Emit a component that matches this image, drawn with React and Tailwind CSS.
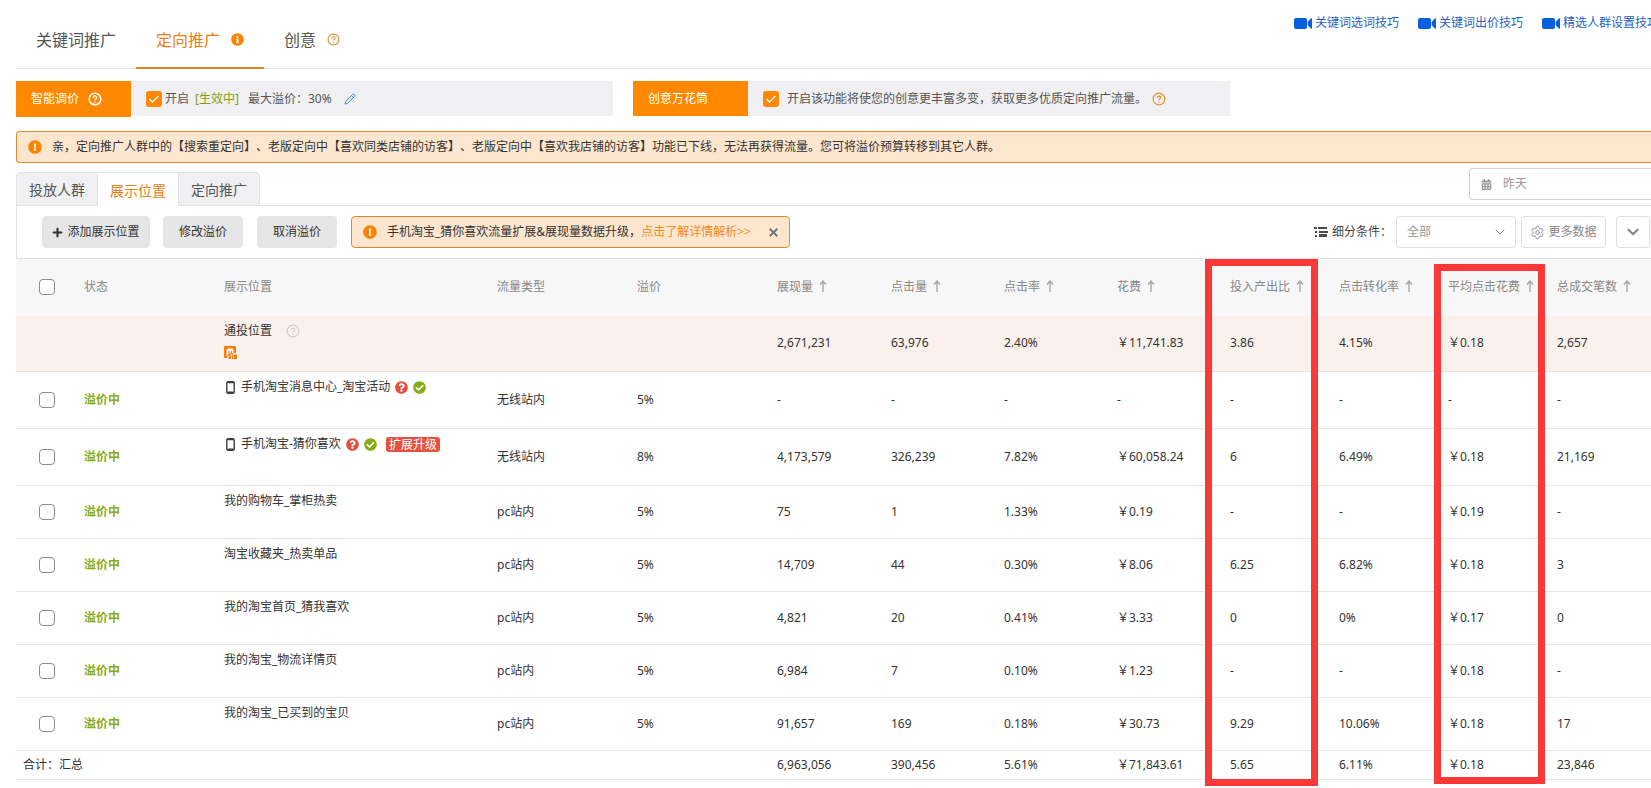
import React from 'react';
import { Settings, Pencil, ChevronDown, HelpCircle } from 'lucide-react';
import { FaCalendarAlt, FaCheckCircle, FaExclamationCircle, FaInfoCircle, FaPlus, FaQuestionCircle } from 'react-icons/fa';

const topLinks = ['关键词选词技巧', '关键词出价技巧', '精选人群设置技巧'];

const metrics = ['展现量', '点击量', '点击率', '花费', '投入产出比', '点击转化率', '平均点击花费', '总成交笔数'];

const rows = [
  { name: '手机淘宝消息中心_淘宝活动', mobile: true, type: '无线站内', bid: '5%', values: ['-', '-', '-', '-', '-', '-', '-', '-'] },
  { name: '手机淘宝-猜你喜欢', mobile: true, upgrade: true, type: '无线站内', bid: '8%', values: ['4,173,579', '326,239', '7.82%', '￥60,058.24', '6', '6.49%', '￥0.18', '21,169'] },
  { name: '我的购物车_掌柜热卖', type: 'pc站内', bid: '5%', values: ['75', '1', '1.33%', '￥0.19', '-', '-', '￥0.19', '-'] },
  { name: '淘宝收藏夹_热卖单品', type: 'pc站内', bid: '5%', values: ['14,709', '44', '0.30%', '￥8.06', '6.25', '6.82%', '￥0.18', '3'] },
  { name: '我的淘宝首页_猜我喜欢', type: 'pc站内', bid: '5%', values: ['4,821', '20', '0.41%', '￥3.33', '0', '0%', '￥0.17', '0'] },
  { name: '我的淘宝_物流详情页', type: 'pc站内', bid: '5%', values: ['6,984', '7', '0.10%', '￥1.23', '-', '-', '￥0.18', '-'] },
  { name: '我的淘宝_已买到的宝贝', type: 'pc站内', bid: '5%', values: ['91,657', '169', '0.18%', '￥30.73', '9.29', '10.06%', '￥0.18', '17'] },
];

const generalValues = ['2,671,231', '63,976', '2.40%', '￥11,741.83', '3.86', '4.15%', '￥0.18', '2,657'];
const totalValues = ['6,963,056', '390,456', '5.61%', '￥71,843.61', '5.65', '6.11%', '￥0.18', '23,846'];

function VideoIcon() {
  return (
    <svg width="18" height="11" viewBox="0 0 18 11" fill="#0a5fe0">
      <rect width="13" height="11" rx="2" />
      <path d="M17 0.3h1v10.4h-1L13.6 7V4z" />
    </svg>
  );
}

function ArrowUp() {
  return (
    <svg width="8" height="12" viewBox="0 0 8 12" fill="none" stroke="#a3a3a3" className="ml-[6px] inline-block align-[-1px]">
      <path d="M4 12V1.5M1 4.5l3-3.5 3 3.5" strokeWidth="1.3" />
    </svg>
  );
}

function PhoneIcon() {
  return (
    <svg width="9" height="13" viewBox="0 0 9 13" fill="none" stroke="#3c3c3c">
      <rect x="0.8" y="0.8" width="7.4" height="11.4" rx="1.2" strokeWidth="1.4" />
      <path d="M1.5 1.4h6M1.5 11.3h6" strokeWidth="1.8" />
    </svg>
  );
}

function ListIcon() {
  return (
    <svg width="14" height="10" viewBox="0 0 14 10" fill="#4a4a4a">
      <path d="M0 0h3v2H0zM1 4h2v2H1zM1 8h2v2H1zM4 0h9v2H4zM5 4h9v2H5zM5 7h8v3H5z" />
    </svg>
  );
}

function PlacementIcon() {
  return (
    <svg width="13" height="13" viewBox="0 0 13 13">
      <rect width="12" height="12" rx="1" fill="#f77f0b" />
      <path d="M2.5 9.5V3.5h1.2V2.4h4.8v1.1h1V7H8V5H6.8v2.5H5.6V5H4.4v4.5z" fill="#fff" />
      <path d="M3.5 10h3V8.4h2.6V7H13v1.5h-1.5V11H13v2H5v-1.5H3.5z" fill="#fbf1ec" />
      <path d="M5 10h2v3H5zM8 9h1.5v4H8zM10 8.5h3V13h-3z" fill="#f77f0b" />
    </svg>
  );
}

function OrangeCheck({ id }) {
  return (
    <span className="relative inline-flex shrink-0">
      <input id={id} type="checkbox" defaultChecked className="h-4 w-4 appearance-none rounded-[3px] bg-[#ff8800]" />
      <svg width="16" height="16" viewBox="0 0 16 16" fill="none" stroke="#fff" strokeWidth="1.3" className="pointer-events-none absolute inset-0">
        <path d="M3.5 8l3 3 6-6" />
      </svg>
    </span>
  );
}

function RowCheck({ label }) {
  return <input type="checkbox" aria-label={label} className="ml-[23px] block h-4 w-4 appearance-none rounded-[4px] border border-[#8c8c8c] bg-white" />;
}

function ValueCells({ values }) {
  return values.map((v, i) => <td key={i} className="whitespace-nowrap">{v}</td>);
}

export default function App() {
  return (
    <div className="overflow-hidden bg-white pb-2 pl-4 text-[12px] leading-[18px] text-[#333] [font-family:'Noto_Sans','Noto_Sans_CJK_SC',sans-serif] [text-spacing-trim:space-all]">
      <header className="flex items-start justify-between border-b border-[#e3e3e3]">
        <nav className="-mb-px flex h-[69px] text-[16px] leading-[24px] text-[#555]">
          <a href="#keyword" className="flex items-center border-b-2 border-transparent px-5 pt-3">关键词推广</a>
          <a href="#target" className="flex items-center gap-[11px] border-b-2 border-[#dd8522] px-5 pt-3 text-[#ec8013]">
            定向推广
            <FaInfoCircle size={13} color="#f98404" />
          </a>
          <a href="#creative" className="flex items-center gap-[11px] border-b-2 border-transparent px-5 pt-3">
            创意
            <HelpCircle size={13} color="#e8882a" />
          </a>
        </nav>
        <div className="-mr-2 flex shrink-0 gap-[19px] pt-[14px]">
          {topLinks.map(text => (
            <a key={text} href="#tips" className="flex items-center gap-[3px] whitespace-nowrap text-[#1f5fc4]">
              <VideoIcon />
              {text}
            </a>
          ))}
        </div>
      </header>

      <div className="mt-3 flex gap-5">
        <section className="flex h-9 w-[597px]">
          <h2 className="flex w-[115px] items-center gap-[9px] bg-[#ff8800] pl-[15px] text-white">
            智能调价
            <HelpCircle size={14} strokeWidth={2.5} />
          </h2>
          <div className="mb-px flex flex-1 items-center bg-[#f0f0f2] pl-[15px] text-[#555]">
            <OrangeCheck id="smart" />
            <label htmlFor="smart" className="ml-[3px]">开启</label>
            <span className="ml-[6px] text-[#7fa30f]">[生效中]</span>
            <span className="ml-[9px]">最大溢价：30%</span>
            <button type="button" aria-label="修改" className="ml-3">
              <Pencil size={12} color="#4285e8" />
            </button>
          </div>
        </section>
        <section className="flex h-[35px] w-[597px]">
          <h2 className="flex w-[115px] items-center bg-[#ff8800] pl-[15px] text-white">创意万花筒</h2>
          <div className="flex flex-1 items-center bg-[#f0f0f2] pl-[15px] text-[#555]">
            <OrangeCheck id="creative-on" />
            <label htmlFor="creative-on" className="ml-2">开启该功能将使您的创意更丰富多变，获取更多优质定向推广流量。</label>
            <HelpCircle size={14} color="#f08a24" className="ml-[5px]" />
          </div>
        </section>
      </div>

      <div className="mt-[14px] flex h-8 items-center gap-[10px] rounded-l-[4px] border border-r-0 border-[#dc8a30] bg-[#fde6ce] pl-[11px]">
        <FaExclamationCircle size={14} color="#f98404" />
        亲，定向推广人群中的【搜索重定向】、老版定向中【喜欢同类店铺的访客】、老版定向中【喜欢我店铺的访客】功能已下线，无法再获得流量。您可将溢价预算转移到其它人群。
      </div>

      <div className="mt-[5px] flex items-start justify-between">
        <div className="mt-1 -mb-px flex h-[34px] text-[14px] leading-[20px] text-[#555]">
          <button type="button" className="rounded-tl-[4px] border border-[#e3e3e6] bg-[#f0f0f2] px-3 pt-[2px]">投放人群</button>
          <button type="button" className="border-t border-[#e3e3e6] bg-white px-3 pt-[2px] text-[#e5811a]">展示位置</button>
          <button type="button" className="rounded-tr-[4px] border border-[#e3e3e6] bg-[#f0f0f2] px-3 pt-[2px]">定向推广</button>
        </div>
        <button type="button" className="flex h-8 w-[182px] items-center gap-[11px] rounded-l-[4px] border border-r-0 border-[#d4d0d6] pl-[11px] text-[#999]">
          <FaCalendarAlt size={11} />
          昨天
        </button>
      </div>

      <div className="flex h-[53px] items-center justify-between border-t border-l border-[#e3e3e6] pr-px pl-[25px]">
        <div className="flex items-center">
          <button type="button" className="flex h-8 w-[108px] items-center justify-center gap-1 rounded-[4px] bg-[#e6e6e6]">
            <FaPlus size={11} />
            添加展示位置
          </button>
          <button type="button" className="ml-[13px] h-8 w-20 rounded-[4px] bg-[#e6e6e6]">修改溢价</button>
          <button type="button" className="ml-[14px] h-8 w-20 rounded-[4px] bg-[#e6e6e6]">取消溢价</button>
          <div className="ml-[14px] flex h-8 items-center rounded-[4px] border border-[#dc8a30] bg-[#fde6ce] px-[11px] whitespace-nowrap">
            <FaExclamationCircle size={14} color="#f98404" />
            <span className="ml-[10px]">手机淘宝_猜你喜欢流量扩展&amp;展现量数据升级，</span>
            <a href="#detail" className="text-[#f08a1c]">点击了解详情解析&gt;&gt;</a>
            <button type="button" aria-label="关闭" className="ml-[18px]">
              <svg width="9" height="9" viewBox="0 0 9 9" stroke="#777" strokeWidth="2">
                <path d="M0.7 0.7l7.6 7.6M8.3 0.7L0.7 8.3" />
              </svg>
            </button>
          </div>
        </div>
        <div className="flex items-center">
          <ListIcon />
          <label htmlFor="cond" className="ml-1 w-16 text-[#444]">细分条件：</label>
          <span className="relative flex items-center">
            <select id="cond" className="h-8 w-[120px] appearance-none rounded-[4px] border border-[#dedede] bg-white pl-[10px] text-[#999]">
              <option>全部</option>
            </select>
            <ChevronDown size={16} color="#999" strokeWidth={1.5} className="pointer-events-none absolute right-2" />
          </span>
          <button type="button" className="ml-[5px] flex h-8 w-[85px] items-center justify-center gap-[3px] rounded-[4px] border border-[#dedede] text-[#888]">
            <Settings size={15} strokeWidth={1.5} />
            更多数据
          </button>
          <button type="button" aria-label="展开" className="ml-[10px] flex h-8 w-[34px] items-center justify-center rounded-[4px] border border-[#dedede]">
            <ChevronDown size={18} color="#888" strokeWidth={3} />
          </button>
        </div>
      </div>

      <div className="relative">
        <table className="w-full table-fixed border-collapse border-t border-[#e3e3e6] text-left">
          <colgroup>
            <col className="w-[68px]" />
            <col className="w-[140px]" />
            <col className="w-[273px]" />
            <col className="w-[140px]" />
            <col className="w-[140px]" />
            <col className="w-[114px]" />
            <col className="w-[113px]" />
            <col className="w-[113px]" />
            <col className="w-[113px]" />
            <col className="w-[109px]" />
            <col className="w-[109px]" />
            <col className="w-[109px]" />
            <col />
          </colgroup>
          <thead>
            <tr className="h-[57px] bg-[#f7f7f7] text-[#888]">
              <th><RowCheck label="全选" /></th>
              <th className="font-normal">状态</th>
              <th className="font-normal">展示位置</th>
              <th className="font-normal">流量类型</th>
              <th className="font-normal">溢价</th>
              {metrics.map(m => (
                <th key={m} className="font-normal whitespace-nowrap">
                  {m}
                  <ArrowUp />
                </th>
              ))}
            </tr>
          </thead>
          <tbody>
            <tr className="h-14 border-b border-[#e6e6e6] bg-[#fbf1ec]">
              <td />
              <td />
              <td className="pt-[6px] align-top">
                <div className="flex items-center gap-[14px]">
                  通投位置
                  <HelpCircle size={14} color="#ccc" />
                </div>
                <div className="mt-[6px]"><PlacementIcon /></div>
              </td>
              <td />
              <td />
              <ValueCells values={generalValues} />
            </tr>
            {rows.map(r => (
              <tr key={r.name} className={r.mobile ? 'h-[57px] border-b border-[#e6e6e6]' : 'h-[53px] border-b border-[#e6e6e6]'}>
                <td><RowCheck label={r.name} /></td>
                <td className="font-bold text-[#8aab14]">溢价中</td>
                <td className="pt-[6px] align-top">
                  <div className="flex items-center whitespace-nowrap">
                    {r.mobile && <span className="mr-[6px] ml-[2px]"><PhoneIcon /></span>}
                    {r.name}
                    {r.mobile && <FaQuestionCircle size={13} color="#e2503c" className="ml-[5px]" />}
                    {r.mobile && <FaCheckCircle size={13} color="#85ad12" className="ml-[5px]" />}
                    {r.upgrade && <span className="ml-[9px] rounded-[3px] bg-[#e4523f] px-[3px] leading-[15px] text-white">扩展升级</span>}
                  </div>
                </td>
                <td>{r.type}</td>
                <td>{r.bid}</td>
                <ValueCells values={r.values} />
              </tr>
            ))}
          </tbody>
          <tfoot>
            <tr className="h-[29px] border-b border-[#e6e6e6]">
              <td colSpan={5} className="pl-[7px]">合计：汇总</td>
              <ValueCells values={totalValues} />
            </tr>
          </tfoot>
        </table>

        {/* highlight frames over the ROI and average click cost columns */}
        <div className="pointer-events-none absolute top-[1px] -bottom-[6px] left-[1189px] w-[113px] border-[7px] border-[#fa3838]" />
        <div className="pointer-events-none absolute top-[6px] -bottom-1 left-[1418px] w-[111px] border-[7px] border-[#fa3838]" />
      </div>
    </div>
  );
}
